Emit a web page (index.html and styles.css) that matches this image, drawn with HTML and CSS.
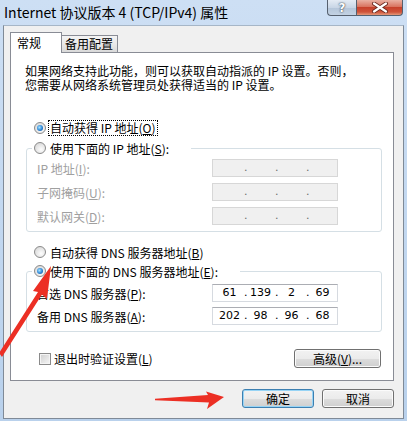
FILE: index.html
```html
<!DOCTYPE html>
<html>
<head>
<meta charset="utf-8"/>
<link rel="stylesheet" href="styles.css">
<title>Internet 协议版本 4 (TCP/IPv4) 属性</title>
</head>
<body>
<div class="window">
  <div class="titlebar">
    <span class="title">Internet 协议版本 4 (TCP/IPv4) 属性</span>
    <div class="caption">
      <span class="cap cap-help">?</span>
      <span class="cap cap-close">
        <svg width="18" height="11" viewBox="0 0 18 11">
          <path d="M3 1.5 L15 9.5 M15 1.5 L3 9.5" stroke="#6b2a20" stroke-width="4" stroke-linecap="round"/>
          <path d="M3 1.5 L15 9.5 M15 1.5 L3 9.5" stroke="#fff" stroke-width="2.2" stroke-linecap="round"/>
        </svg>
      </span>
    </div>
  </div>

  <div class="client">
    <div class="tabs">
      <div class="tab tab-on">常规</div>
      <div class="tab">备用配置</div>
    </div>
    <div class="panel">
      <p class="intro">如果网络支持此功能，则可以获取自动指派的 IP 设置。否则，<br>您需要从网络系统管理员处获得适当的 IP 设置。</p>

      <div class="opt opt-first"><span class="radio on"></span><span class="focus">自动获得 IP 地址(<u>O</u>)</span></div>

      <fieldset class="group group-ip">
        <legend><span class="radio"></span>使用下面的 IP 地址(<u>S</u>):</legend>
        <div class="row dim"><span class="lbl">IP 地址(<u>I</u>):</span>
          <span class="ip ip-off"><span class="seg"></span><span class="dot">.</span><span class="seg"></span><span class="dot">.</span><span class="seg"></span><span class="dot">.</span><span class="seg"></span></span></div>
        <div class="row dim"><span class="lbl">子网掩码(<u>U</u>):</span>
          <span class="ip ip-off"><span class="seg"></span><span class="dot">.</span><span class="seg"></span><span class="dot">.</span><span class="seg"></span><span class="dot">.</span><span class="seg"></span></span></div>
        <div class="row dim"><span class="lbl">默认网关(<u>D</u>):</span>
          <span class="ip ip-off"><span class="seg"></span><span class="dot">.</span><span class="seg"></span><span class="dot">.</span><span class="seg"></span><span class="dot">.</span><span class="seg"></span></span></div>
      </fieldset>

      <div class="opt opt-dns"><span class="radio"></span><span>自动获得 DNS 服务器地址(<u>B</u>)</span></div>

      <fieldset class="group group-dns">
        <legend><span class="radio on"></span>使用下面的 DNS 服务器地址(<u>E</u>):</legend>
        <div class="row"><span class="lbl">首选 DNS 服务器(<u>P</u>):</span>
          <span class="ip"><span class="seg">61</span><span class="dot">.</span><span class="seg">139</span><span class="dot">.</span><span class="seg">2</span><span class="dot">.</span><span class="seg">69</span></span></div>
        <div class="row"><span class="lbl">备用 DNS 服务器(<u>A</u>):</span>
          <span class="ip"><span class="seg">202</span><span class="dot">.</span><span class="seg">98</span><span class="dot">.</span><span class="seg">96</span><span class="dot">.</span><span class="seg">68</span></span></div>
      </fieldset>

      <div class="bottom-row">
        <span class="check"></span><span class="check-text">退出时验证设置(<u>L</u>)</span>
        <button class="btn btn-adv">高级(<u>V</u>)...</button>
      </div>
    </div>

    <div class="actions">
      <button class="btn btn-default">确定</button>
      <button class="btn">取消</button>
    </div>
  </div>

  <!-- red annotation arrows drawn over the dialog -->
  <svg class="arrows" width="407" height="421" viewBox="0 0 407 421">
    <polygon points="51,266 47,299 42,294.5 2,357 -1,353 38,292 33,291" fill="#ec2f24"/>
    <polygon points="155,398.8 208,395 206,391.5 224,397 207,409 209,402.5 155,400.2" fill="#ec2f24"/>
  </svg>
</div>
</body>
</html>
```

FILE: styles.css
```css
* { box-sizing: border-box; }

body {
  margin: 0;
  font-family: "Noto Sans CJK SC", "Liberation Sans", sans-serif;
  font-size: 12px;
  color: #000;
}

.window {
  position: relative;
  width: 407px;
  height: 421px;
  overflow: hidden;
  background: linear-gradient(#cddff4, #b9d1ec);
}

.titlebar { display: flex; height: 25px; }
.title { padding: 3px 0 0 4px; font-size: 14px; line-height: 18px; }

.caption { display: flex; margin-left: auto; margin-right: 4px; height: 16px; }
.cap {
  display: flex;
  align-items: center;
  justify-content: center;
  height: 16px;
  border: 1px solid #56606e;
  border-top: none;
}
.cap-help {
  width: 29px;
  border-radius: 0 0 0 4px;
  border-right: none;
  background: linear-gradient(#e4ebf4, #c9d6e6 50%, #b4c5d9 51%, #c3d2e3);
  color: #fff;
  font-family: "DejaVu Sans", sans-serif;
  font-weight: bold;
  font-size: 12px;
  text-shadow: 0 0 2px #3b4655, 0 0 1px #3b4655;
}
.cap-close {
  width: 47px;
  border-radius: 0 0 4px 0;
  background: linear-gradient(#eab1a3, #d9735f 45%, #c7412b 50%, #cf543b 80%, #e49a7b);
}

.client {
  height: 394px;
  margin: 0 3px;
  border: 1px solid #7f8a97;
  border-top-color: #a6b6c7;
  background: #f0f0f0;
  padding: 6px 9px 0 6px;
}

.tabs {
  display: flex;
  align-items: flex-end;
  height: 21px;
  margin-bottom: -1px;
  position: relative;
  z-index: 1;
}
.tab {
  width: 57px;
  height: 17px;
  margin: 0 0 1px -1px;
  padding-left: 3px;
  border: 1px solid #898c95;
  border-bottom: none;
  line-height: 16px;
  background: linear-gradient(#f4f4f4, #e9e9e9 50%, #d9d9d9);
}
.tab-on {
  width: 52px;
  height: 21px;
  margin: 0;
  padding-left: 6px;
  line-height: 20px;
  background: #fff;
  position: relative;
  z-index: 2;
}

.panel {
  width: 384px;
  border: 1px solid #898c95;
  background: #fff;
  padding: 11px 11px 12px 14px;
}

.intro { margin: 0; line-height: 14px; }

.opt { display: flex; align-items: center; height: 14px; padding-left: 9px; }
.opt-first { margin-top: 29px; }
.opt-dns { margin-top: 13px; }
.focus { outline: 1px dotted #000; outline-offset: 0; line-height: 14px; padding: 0 1px; margin-left: -1px; }

.radio {
  position: relative;
  flex: none;
  width: 12px;
  height: 12px;
  margin-right: 4px;
  border-radius: 50%;
  border: 1px solid #8a8a8a;
  background: radial-gradient(circle at 60% 65%, #fdfdfd, #dedede 70%, #cfcfcf);
}
.radio.on::after {
  content: "";
  position: absolute;
  left: 2px;
  top: 2px;
  width: 6px;
  height: 6px;
  border-radius: 50%;
  background: radial-gradient(circle at 40% 40%, #a8e4ff, #2b85d6 55%, #0f4a8c);
}

.group {
  margin: 6px 0 0 1px;
  min-width: 0;
  border: 1px solid #d5dfe5;
  border-radius: 3px;
  padding: 4px 0 6px 5px;
}
.group legend {
  display: flex;
  align-items: center;
  height: 14px;
  padding: 0 22px 0 2px;
}
.group-dns { margin-top: 5px; padding-top: 6px; }

.row { display: flex; align-items: center; height: 18px; padding-left: 5px; }
.row + .row { margin-top: 6px; }
.group-dns .row + .row { margin-top: 5px; }
.lbl { width: 175px; }
.dim { color: #a0a0a0; }

.ip {
  display: flex;
  width: 126px;
  height: 18px;
  padding-left: 2px;
  border: 1px solid #d6dae0;
  border-top-color: #abadb3;
  background: #fff;
  font-family: "DejaVu Sans", sans-serif;
  font-size: 11px;
  line-height: 16px;
  color: #000;
}
.ip-off { background: #f0f0f0; border-color: #d7d7d7; color: #6d6d6d; }
.seg { width: 29px; text-align: center; }
.dot { width: 2px; text-align: center; }

.bottom-row { display: flex; align-items: center; height: 19px; margin-top: 17px; padding-left: 14px; }
.check {
  width: 12px;
  height: 12px;
  margin-right: 3px;
  border: 1px solid #8a8a8a;
  background: linear-gradient(135deg, #cfcfcf, #f6f6f6);
  box-shadow: inset 0 0 0 1px #f4f4f4;
}

.btn {
  height: 19px;
  padding: 0;
  border: 1px solid #707070;
  border-radius: 3px;
  background: linear-gradient(#f2f2f2, #ebebeb 50%, #dddddd 51%, #cfcfcf);
  box-shadow: inset 0 0 0 1px #fbfbfb;
  font-family: "Noto Sans CJK SC", sans-serif;
  font-size: 12px;
  line-height: 15px;
  color: #000;
}
.btn-adv { width: 87px; margin-left: auto; margin-right: 1px; }

.actions { display: flex; justify-content: flex-end; gap: 8px; margin-top: 8px; padding-right: 0; }
.actions .btn { width: 72px; }
.btn-default { border-color: #3c7fb1; box-shadow: inset 0 0 0 1px #97d4f5; }

.arrows { position: absolute; left: 0; top: 0; pointer-events: none; }
```
